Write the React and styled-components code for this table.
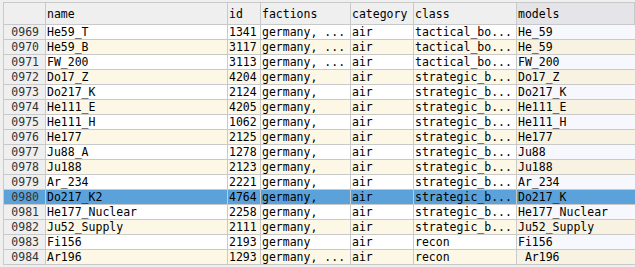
import React from "react";
import styled, { createGlobalStyle } from "styled-components";

const GlobalStyle = createGlobalStyle`
  html, body {
    margin: 0;
    padding: 0;
    background: #efefef;
    overflow: hidden;
  }
`;

const columns = ["name", "id", "factions", "category", "class", "models"];

const rows = [
  ["0969", "He59_T", "1341", "germany, ...", "air", "tactical_bo...", "He_59"],
  ["0970", "He59_B", "3117", "germany, ...", "air", "tactical_bo...", "He_59"],
  ["0971", "FW_200", "3113", "germany, ...", "air", "tactical_bo...", "FW_200"],
  ["0972", "Do17_Z", "4204", "germany,", "air", "strategic_b...", "Do17_Z"],
  ["0973", "Do217_K", "2124", "germany,", "air", "strategic_b...", "Do217_K"],
  ["0974", "He111_E", "4205", "germany,", "air", "strategic_b...", "He111_E"],
  ["0975", "He111_H", "1062", "germany,", "air", "strategic_b...", "He111_H"],
  ["0976", "He177", "2125", "germany,", "air", "strategic_b...", "He177"],
  ["0977", "Ju88_A", "1278", "germany,", "air", "strategic_b...", "Ju88"],
  ["0978", "Ju188", "2123", "germany,", "air", "strategic_b...", "Ju188"],
  ["0979", "Ar_234", "2221", "germany,", "air", "strategic_b...", "Ar_234"],
  ["0980", "Do217_K2", "4764", "germany,", "air", "strategic_b...", "Do217_K"],
  ["0981", "He177_Nuclear", "2258", "germany,", "air", "strategic_b...", "He177_Nuclear"],
  ["0982", "Ju52_Supply", "2111", "germany,", "air", "strategic_b...", "Ju52_Supply"],
  ["0983", "Fi156", "2193", "germany", "air", "recon", "Fi156"],
  ["0984", "Ar196", "1293", "germany, ...", "air", "recon", " Ar196"],
];

const SELECTED = "0980";

const App = () => {
  return (
    <>
      <GlobalStyle />
      <StyledGrid>
        <HeaderRow>
          <HeadCell />
          {columns.map((col, i) => (
            <HeadCell key={col} $last={i === columns.length - 1}>
              {col}
            </HeadCell>
          ))}
        </HeaderRow>
        {rows.map((row, index) => {
          const selected = row[0] === SELECTED;
          const tone = selected ? "selected" : index % 2 === 1 ? "cream" : "white";
          return (
            <Row key={row[0]}>
              <NumCell $selected={selected}>{row[0]}</NumCell>
              {row.slice(1).map((value, i) => (
                <Cell key={i} $tone={tone} $last={i === row.length - 2}>
                  {value}
                </Cell>
              ))}
            </Row>
          );
        })}
      </StyledGrid>
    </>
  );
};

export default App;

const cellBg = {
  white: "#ffffff",
  cream: "#fdf8e6",
  selected: "#5ca2da",
};

const lastBg = {
  white: "#f7f8fd",
  cream: "#f7f2e1",
  selected: "#5ca2da",
};

const StyledGrid = styled.div`
  margin: 2px 0 0 3px;
  border-top: 1px solid #c9c9c9;
  border-left: 1px solid #c9c9c9;
  font-family: "DejaVu Sans Mono", "Liberation Mono", monospace;
  font-size: 11.5px;
  color: #000;
`;

const gridCols = "42px 182px 33px 90px 63px 103px 1fr";

const HeaderRow = styled.div`
  display: grid;
  grid-template-columns: ${gridCols};
  height: 22px;
  border-bottom: 1px solid #c9c9c9;
  box-sizing: border-box;
`;

const HeadCell = styled.div`
  background: ${(p) => (p.$last ? "#e5e5e9" : "#efefef")};
  border-right: 1px solid #c9c9c9;
  display: flex;
  align-items: center;
  padding-left: 1px;
  white-space: pre;
  overflow: hidden;
`;

const Row = styled.div`
  display: grid;
  grid-template-columns: ${gridCols};
  height: 15px;
  border-bottom: 1px solid #c9c9c9;
  box-sizing: border-box;
`;

const NumCell = styled.div`
  background: ${(p) => (p.$selected ? "#5ca2da" : "#efefef")};
  border-right: 1px solid #c9c9c9;
  color: #333;
  text-align: right;
  padding-right: 6px;
  line-height: 14px;
`;

const Cell = styled.div`
  background: ${(p) => (p.$last ? lastBg[p.$tone] : cellBg[p.$tone])};
  border-right: ${(p) => (p.$last ? "none" : "1px solid #c9c9c9")};
  padding-left: 1px;
  line-height: 14px;
  white-space: pre;
  overflow: hidden;
`;
